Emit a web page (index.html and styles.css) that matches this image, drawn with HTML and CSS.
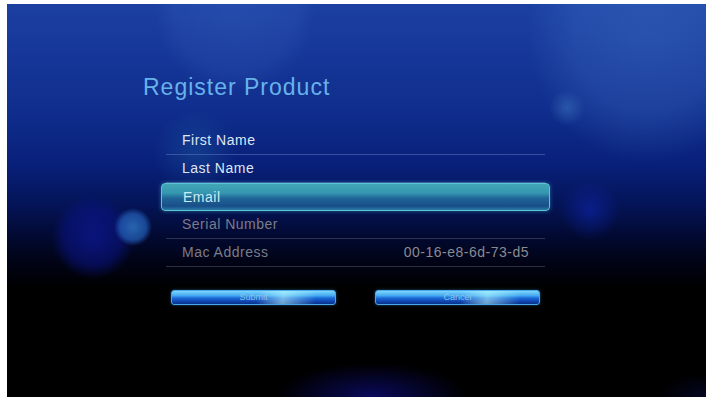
FILE: index.html
```html
<!DOCTYPE html>
<html lang="en">
<head>
  <meta charset="UTF-8">
  <title>Register Product</title>
  <link rel="stylesheet" href="styles.css">
</head>
<body>
  <div class="screen">
    <h1 class="title">Register Product</h1>
    <div class="form">
      <div class="row">First Name</div>
      <div class="row">Last Name</div>
      <div class="row selected">Email</div>
      <div class="row disabled">Serial Number</div>
      <div class="row disabled">
        <span>Mac Address</span>
        <span class="value">00-16-e8-6d-73-d5</span>
      </div>
      <div class="buttons">
        <button class="btn">Submit</button>
        <button class="btn">Cancel</button>
      </div>
    </div>
  </div>
</body>
</html>
```

FILE: styles.css
```css
html, body {
  margin: 0;
  padding: 0;
  background: #fff;
}
body {
  padding: 4px 3px 4px 7px;
  font-family: "Liberation Sans", Arial, sans-serif;
}
.screen {
  width: 699px;
  height: 393px;
  box-sizing: border-box;
  padding: 70px 0 0 136px;
  overflow: hidden;
  background:
    radial-gradient(circle 19px at 126px 223px, rgba(45, 115, 195, 0.85) 0, rgba(35, 95, 185, 0.7) 13px, rgba(30, 80, 180, 0) 19px),
    radial-gradient(circle 42px at 86px 233px, rgba(12, 24, 150, 0.75) 0, rgba(10, 20, 135, 0.55) 28px, rgba(10, 20, 130, 0) 42px),
    radial-gradient(circle 30px at 583px 206px, rgba(12, 34, 160, 0.7) 0, rgba(10, 30, 150, 0) 30px),
    radial-gradient(ellipse 95px 34px at 365px 393px, rgba(12, 12, 115, 0.8) 0, rgba(10, 10, 100, 0) 100%),
    radial-gradient(ellipse 50px 24px at 699px 393px, rgba(12, 20, 110, 0.3) 0, rgba(10, 10, 100, 0) 100%),
    radial-gradient(circle 18px at 560px 104px, rgba(80, 150, 210, 0.35) 0, rgba(80, 150, 210, 0) 18px),
    radial-gradient(ellipse 120px 130px at 640px 30px, rgba(90, 150, 225, 0.25) 0, rgba(90, 150, 225, 0.18) 60%, rgba(90, 150, 225, 0) 100%),
    radial-gradient(circle 80px at 228px 8px, rgba(90, 140, 225, 0.16) 0, rgba(90, 140, 225, 0.1) 75%, rgba(90, 140, 225, 0) 100%),
    radial-gradient(circle 42px at 188px 148px, rgba(40, 120, 175, 0.28) 0, rgba(40, 120, 175, 0) 42px),
    linear-gradient(to bottom, #1b40a2 0, #163799 50px, #0f2d8c 110px, #08207a 160px, #041458 200px, #020a34 230px, #010418 255px, #000 285px);
}
.title {
  margin: 0 0 27px;
  font-size: 23px;
  line-height: 26px;
  font-weight: normal;
  letter-spacing: 1px;
  color: #68b2ea;
}
.form {
  width: 389px;
  margin-left: 18px;
}
.row {
  height: 27px;
  line-height: 27px;
  margin: 0 5px;
  padding: 0 16px;
  border-bottom: 1px solid rgba(110, 130, 200, 0.45);
  font-size: 14px;
  letter-spacing: 0.5px;
  color: #dfe6f5;
  display: flex;
  justify-content: space-between;
}
.row.selected {
  margin: 0;
  padding: 0 21px;
  height: 26px;
  line-height: 26px;
  border: 1px solid #5cc4d4;
  border-radius: 4px;
  color: #cdebf0;
  background: linear-gradient(to bottom, #42a6b6 0, #3596b0 35%, #1f6597 55%, #194e88 85%, #2a7aa8 100%);
  box-shadow: 0 0 4px rgba(80, 200, 220, 0.45);
}
.row.disabled {
  color: #7c7c86;
  border-bottom-color: rgba(90, 90, 110, 0.5);
}
.row .value {
  color: #8a8a92;
}
.buttons {
  display: flex;
  justify-content: space-between;
  padding: 0 10px;
  margin-top: 23px;
}
.btn {
  width: 165px;
  height: 15px;
  padding: 0;
  border: 1px solid #4aa8e8;
  border-radius: 3px;
  font-family: "Liberation Sans", Arial, sans-serif;
  font-size: 9px;
  line-height: 13px;
  color: #8cc4ec;
  background:
    linear-gradient(100deg, rgba(190, 255, 255, 0) 52%, rgba(190, 255, 255, 0.55) 68%, rgba(190, 255, 255, 0) 88%),
    linear-gradient(to bottom, #7fd6ff 0, #45aaf0 35%, #1a68d8 55%, #0f46b0 80%, #0a2f88 100%);
  box-shadow: 0 0 3px rgba(60, 160, 240, 0.5);
}
```
